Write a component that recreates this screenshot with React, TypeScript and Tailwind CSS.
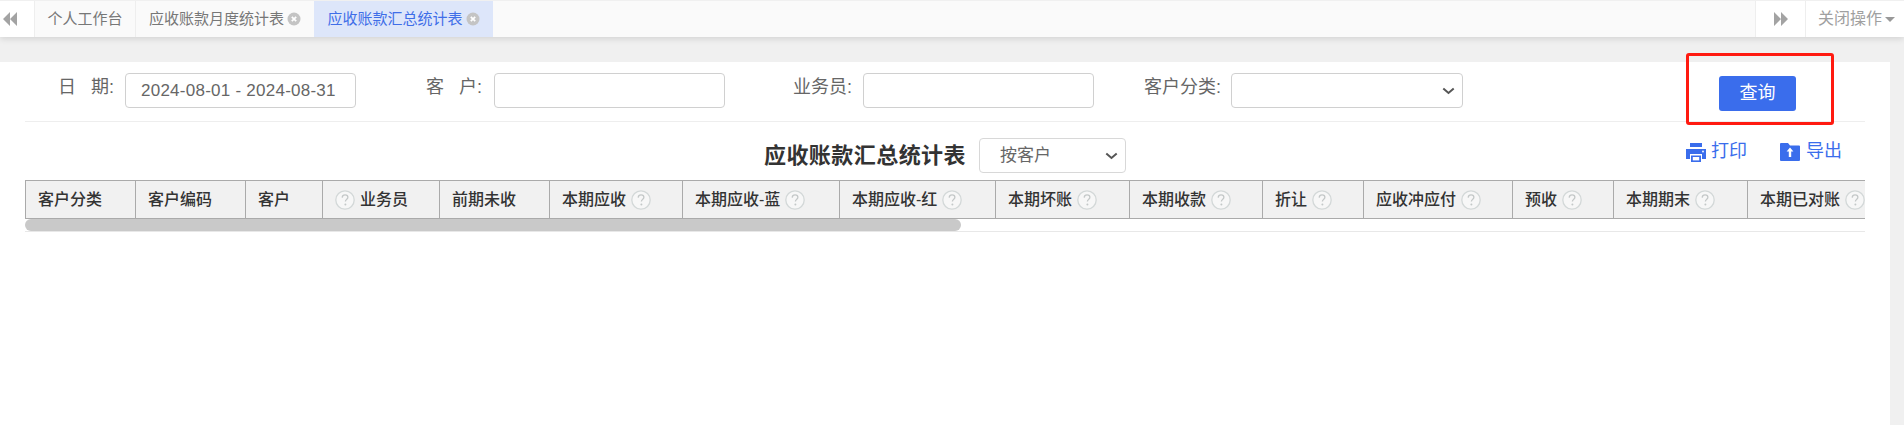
import React from "react";

const font = "font-['Liberation_Sans','Noto_Sans_CJK_SC',sans-serif]";

function Help() {
  return (
    <svg width="20" height="20" viewBox="0 0 20 20" className="shrink-0">
      <circle cx="10" cy="10" r="9.2" fill="#f7f7f7" stroke="#d3d8d8" strokeWidth="1.3" />
      <path d="M7.200 7.600c.1-1.700 1.200-2.700 2.900-2.700 1.600 0 2.800 1 2.800 2.400 0 1.100-.6 1.600-1.400 2.200-.8.600-1.100 1-1.100 2" fill="none" stroke="#c4c8c8" strokeWidth="1.300" />
      <circle cx="10.400" cy="14.500" r="1" fill="#c4c8c8" />
    </svg>
  );
}

function CloseDot() {
  return (
    <svg width="14" height="14" viewBox="0 0 14 14" className="shrink-0">
      <circle cx="7" cy="7" r="6.500" fill="#c4c4c4" />
      <path d="M4.800 4.800l4.400 4.400M9.200 4.800l-4.400 4.400" stroke="#fff" strokeWidth="1.700" />
    </svg>
  );
}

function Arrows({ right }: { right?: boolean }) {
  return (
    <svg width="14" height="14" viewBox="0 0 14 14" className={right ? "rotate-180" : ""}>
      <path d="M7 0v14L0 7zM14 0v14L7 7z" fill="#a3a3a3" />
    </svg>
  );
}

function Chevron() {
  return (
    <svg width="13" height="8" viewBox="0 0 13 8">
      <path d="M1.300 1.500L6.500 6l5.200-4.500" fill="none" stroke="#555" strokeWidth="2" />
    </svg>
  );
}

const cols: { t: string; w: string; help?: "before" | "after" }[] = [
  { t: "客户分类", w: "w-[110px]" },
  { t: "客户编码", w: "w-[110px]" },
  { t: "客户", w: "w-[77px]" },
  { t: "业务员", w: "w-[117px]", help: "before" },
  { t: "前期未收", w: "w-[110px]" },
  { t: "本期应收", w: "w-[133px]", help: "after" },
  { t: "本期应收-蓝", w: "w-[157px]", help: "after" },
  { t: "本期应收-红", w: "w-[156px]", help: "after" },
  { t: "本期坏账", w: "w-[134px]", help: "after" },
  { t: "本期收款", w: "w-[133px]", help: "after" },
  { t: "折让", w: "w-[101px]", help: "after" },
  { t: "应收冲应付", w: "w-[149px]", help: "after" },
  { t: "预收", w: "w-[101px]", help: "after" },
  { t: "本期期末", w: "w-[134px]", help: "after" },
  { t: "本期已对账", w: "w-[150px]", help: "after" },
];

export default function App() {
  return (
    <div className={`${font} w-[1904px] h-[425px] overflow-hidden bg-[#f0f0f0] flex flex-col`}>
      <div className="h-[37px] shrink-0 flex bg-[#fafafa] shadow-[0_2px_6px_rgba(0,0,0,0.12)] border-t border-[#f0f0f0] text-[15px] text-[#777]">
        <div className="w-[35px] bg-white border-r border-[#eee] flex items-center pl-[3px]"><Arrows /></div>
        <div className="w-[101px] border-r border-[#eee] flex items-center justify-center">个人工作台</div>
        <div className="w-[178px] flex items-center justify-center gap-[3px]">应收账款月度统计表<CloseDot /></div>
        <div className="w-[179px] bg-[#dde6fa] text-[#3f6ee8] flex items-center justify-center gap-[3px]">应收账款汇总统计表<CloseDot /></div>
        <div className="flex-1" />
        <div className="w-[50px] bg-white border-l border-[#eee] flex items-center pl-[18px]"><Arrows right /></div>
        <div className="w-[99px] bg-white border-l border-[#eee] flex items-center pl-[12px] gap-[3px] text-[#a0a0a0] text-[16px]">
          关闭操作
          <span className="w-0 h-0 border-x-[5px] border-t-[5px] border-x-transparent border-t-[#999]" />
        </div>
      </div>

      <div className="flex-1 pt-[25px] pr-[14px]">
        <div className="relative h-full bg-white px-[25px] text-[18px] text-[#666]">
          <div className="h-[60px] border-b border-[#eee] flex items-start pt-[11px]">
            <span className="ml-[33px] w-[62px] leading-[28px] whitespace-pre">日   期:</span>
            <div className="ml-[5px] w-[231px] h-[35px] border border-[#d0d0d0] rounded-[4px] flex items-center pl-[15px] text-[17px] tracking-[0.25px] text-[#666]">2024-08-01 - 2024-08-31</div>
            <span className="ml-[70px] w-[63px] leading-[28px] whitespace-pre">客   户:</span>
            <div className="ml-[5px] w-[231px] h-[35px] border border-[#d0d0d0] rounded-[4px]" />
            <span className="ml-[68px] w-[60px] leading-[28px]">业务员:</span>
            <div className="ml-[10px] w-[231px] h-[35px] border border-[#d0d0d0] rounded-[4px]" />
            <span className="ml-[50px] w-[78px] leading-[28px] whitespace-nowrap">客户分类:</span>
            <div className="ml-[9px] w-[232px] h-[35px] border border-[#d0d0d0] rounded-[4px] flex items-center justify-end pr-[7px]"><Chevron /></div>
            <div className="ml-[256px] mt-[3px] w-[77px] h-[35px] bg-[#3a6dec] rounded-[3px] text-white text-[18px] flex items-center justify-center">查询</div>
          </div>

          <div className="absolute left-[1686px] top-[-9px] w-[148px] h-[72px] border-[3px] border-[#ff1a10] rounded-[3px]" />

          <div className="h-[58px] relative flex items-start justify-center">
            <div className="flex items-center mt-[16px]">
              <span className="text-[22px] leading-[34px] font-bold text-[#333] tracking-[0.45px]">应收账款汇总统计表</span>
              <div className="ml-[13px] w-[147px] h-[35px] border border-[#d8d8d8] rounded-[4px] flex items-center justify-between pl-[20px] pr-[7px] text-[17px] text-[#666]">
                按客户<Chevron />
              </div>
            </div>
            <div className="absolute right-[23px] top-[16px] flex items-center text-[#3a6dec] text-[18px]">
              <svg width="20" height="20" viewBox="0 0 20 20">
                <path d="M4 1h12v4H4zM0 7h20v10h-4v-5H4v5H0z" fill="#3a6dec" />
                <path d="M5 13.500h10V20H5z" fill="#3a6dec" />
                <path d="M6.800 15h6.400v3.400H6.800z" fill="#fff" />
                <circle cx="17" cy="9.500" r="0.900" fill="#fff" />
              </svg>
              <span className="ml-[5px]">打印</span>
              <svg width="20" height="20" viewBox="0 0 20 20" className="ml-[33px]">
                <path d="M1 1h7l2 2.500h9a1 1 0 0 1 1 1V18a1 1 0 0 1-1 1H1a1 1 0 0 1-1-1V2a1 1 0 0 1 1-1z" fill="#3a6dec" />
                <path d="M10 5.500l3.400 4h-2.200V15H8.800V9.500H6.600z" fill="#fff" />
              </svg>
              <span className="ml-[6px]">导出</span>
            </div>
          </div>

          <div className="overflow-hidden border-b border-[#e8e8e8] h-[52px]">
            <div className="w-[3621px] flex h-[39px] bg-[#f1f1f1] border border-[#aaa] text-[#333] text-[16px] font-medium">
              {cols.map((c) => (
                <div key={c.t} className={`${c.w} shrink-0 border-r border-[#aaa] pl-[12px] flex items-center gap-[5px] whitespace-nowrap last:border-r-0`}>
                  {c.help === "before" && <Help />}
                  {c.t}
                  {c.help === "after" && <Help />}
                </div>
              ))}
            </div>
            <div className="w-[936px] h-[12px] rounded-full bg-[#c9c9c9]" />
          </div>
        </div>
      </div>
    </div>
  );
}
